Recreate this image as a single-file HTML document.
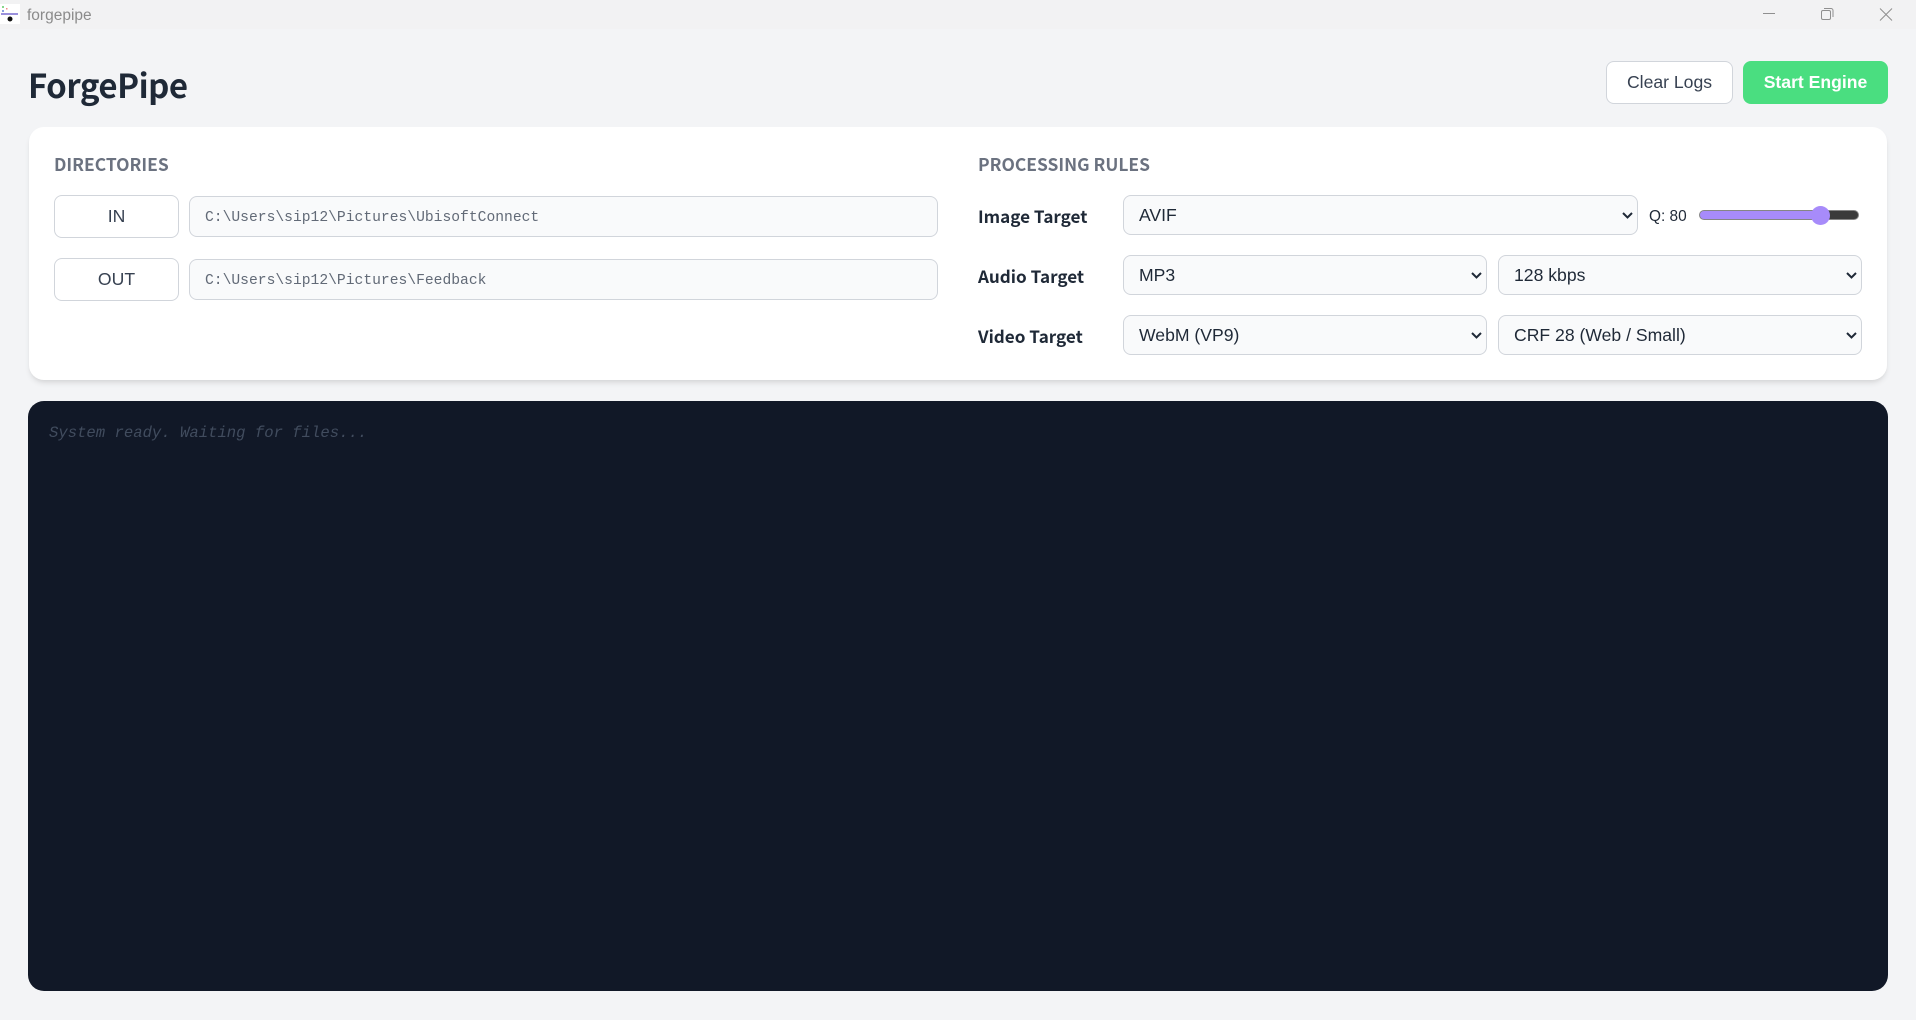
<!DOCTYPE html>
<html lang="en">
<head>
<meta charset="utf-8">
<title>forgepipe</title>
<style>
*{box-sizing:border-box}
html,body{margin:0;padding:0;width:1916px;height:1020px;overflow:hidden;background:#f3f4f6}
body{position:relative;font-family:"Liberation Sans",Arial,sans-serif;color:#1f2937}
.abs{position:absolute}
#bar{left:0;top:0;width:1916px;height:29px;background:#f2f2f3}
#bar .t{position:absolute;left:27px;top:5.5px;font-size:15.5px;line-height:20px;color:#8b8b8b}
.seg{font-family:"Noto Sans CJK JP","Liberation Sans",sans-serif}
h1{position:absolute;left:28px;top:60px;margin:0;font-size:33px;letter-spacing:-.5px;line-height:48px;font-weight:700;color:#1f2937;white-space:nowrap}
button{position:absolute;font-family:"Liberation Sans",Arial,sans-serif;font-size:17.6px;border-radius:8px;border:1.2px solid #d1d5db;background:#fff;color:#374151;padding:0;height:43px;top:61px;cursor:pointer}
#start{left:1743px;width:145px;background:#4ade80;border:none;color:#fff;font-weight:700}
#clear{left:1606px;width:127px}
#card{left:29px;top:127px;width:1858px;height:253px;background:#fff;border-radius:15px;box-shadow:0 4px 6px -1px rgba(0,0,0,.1),0 2px 4px -2px rgba(0,0,0,.06)}
.h{position:absolute;top:153px;margin:0;font-size:17.4px;line-height:24px;font-weight:600;color:#6b7280;white-space:nowrap}
.dirbtn{height:43px;width:125px;left:54px}
.path{position:absolute;left:189px;width:749px;height:41px;padding:2px 15px 0;border:1.2px solid #d1d5db;border-radius:8px;background:#f9fafb;font-family:"Liberation Mono",monospace;font-size:14.67px;color:#626a77;outline:none}
.lab{position:absolute;left:978px;font-size:17.1px;line-height:24px;font-weight:700;color:#1f2937;white-space:nowrap}
.sel{position:absolute;height:40px}
.sel select{appearance:none;-webkit-appearance:none;width:100%;height:100%;border:1.2px solid #d1d5db;border-radius:8px;background:#f9fafb;color:#1f2937;font-family:"Liberation Sans",Arial,sans-serif;font-size:17.6px;padding:0 0 1px 15px;outline:none}
.sel svg{position:absolute;right:4px;top:14px;pointer-events:none}
#q{left:1649px;top:206.5px;font-size:15.4px;line-height:20px;color:#1f2937}
input[type=range]{position:absolute;left:1699px;top:205px;width:160px;height:20px;margin:0;padding:0;appearance:none;-webkit-appearance:none;background:transparent;outline:none}
input[type=range]::-webkit-slider-runnable-track{height:10px;border-radius:5px;border:1px solid #858585;background:linear-gradient(90deg,#a78bfa 0,#a78bfa 122px,#3b3b3b 122px,#3b3b3b 100%)}
input[type=range]::-webkit-slider-thumb{-webkit-appearance:none;appearance:none;width:19px;height:19px;border-radius:50%;background:#a78bfa;border:none;margin-top:-5.5px}
#log{left:28px;top:401px;width:1860px;height:590px;background:#111827;border-radius:16px;padding:22px 21px;font-family:"Liberation Mono",monospace;font-size:15.6px;line-height:20px;font-style:italic;color:#414c5e}
</style>
</head>
<body>
<div id="bar" class="abs">
<svg class="abs" style="left:0;top:4px" width="20" height="20" viewBox="0 0 20 20">
<rect width="20" height="20" fill="#fff"/>
<rect x="2" y="2" width="2" height="2" fill="#86d68a"/>
<rect x="6" y="4" width="1.5" height="1.5" fill="#f08a8a"/>
<rect x="2" y="6" width="2" height="2" fill="#8a9fe0"/>
<rect x="1" y="9" width="17" height="2" fill="#9a90dc"/>
<circle cx="10" cy="15" r="2.5" fill="#111"/>
</svg>
<div class="t">forgepipe</div>
<svg class="abs" style="left:1760px;top:5px" width="140" height="18" viewBox="0 0 140 18" fill="none" stroke="#8f8f8f" stroke-width="1">
<path d="M3 8.5H15"/>
<rect x="61.5" y="5.5" width="9" height="9" rx="1.5"/>
<path d="M64 3.5H71a2 2 0 0 1 2 2V12"/>
<path d="M120 3.5L132 15.5M132 3.5L120 15.5"/>
</svg>
</div>

<h1 class="seg">ForgePipe</h1>
<button id="clear">Clear Logs</button>
<button id="start">Start Engine</button>

<div id="card" class="abs"></div>

<h2 class="h seg" style="left:54px">DIRECTORIES</h2>
<button class="dirbtn" style="top:195px">IN</button>
<input class="path" style="top:196px" type="text" readonly value="C:\Users\sip12\Pictures\UbisoftConnect">
<button class="dirbtn" style="top:258px">OUT</button>
<input class="path" style="top:259px" type="text" readonly value="C:\Users\sip12\Pictures\Feedback">

<h2 class="h seg" style="left:978px">PROCESSING RULES</h2>

<label class="lab seg" style="top:204px">Image Target</label>
<div class="sel" style="left:1123px;top:195px;width:515px"><select><option>AVIF</option></select>
<svg width="13" height="13" viewBox="0 0 13 13" fill="none" stroke="#1f2937" stroke-width="2"><path d="M2 4l4.5 4.5L11 4"/></svg></div>
<div id="q" class="abs">Q: 80</div>
<input type="range" min="0" max="100" value="80">

<label class="lab seg" style="top:264px">Audio Target</label>
<div class="sel" style="left:1123px;top:255px;width:364px"><select><option>MP3</option></select>
<svg width="13" height="13" viewBox="0 0 13 13" fill="none" stroke="#1f2937" stroke-width="2"><path d="M2 4l4.5 4.5L11 4"/></svg></div>
<div class="sel" style="left:1498px;top:255px;width:364px"><select><option>128 kbps</option></select>
<svg width="13" height="13" viewBox="0 0 13 13" fill="none" stroke="#1f2937" stroke-width="2"><path d="M2 4l4.5 4.5L11 4"/></svg></div>

<label class="lab seg" style="top:324px">Video Target</label>
<div class="sel" style="left:1123px;top:315px;width:364px"><select><option>WebM (VP9)</option></select>
<svg width="13" height="13" viewBox="0 0 13 13" fill="none" stroke="#1f2937" stroke-width="2"><path d="M2 4l4.5 4.5L11 4"/></svg></div>
<div class="sel" style="left:1498px;top:315px;width:364px"><select><option>CRF 28 (Web / Small)</option></select>
<svg width="13" height="13" viewBox="0 0 13 13" fill="none" stroke="#1f2937" stroke-width="2"><path d="M2 4l4.5 4.5L11 4"/></svg></div>

<div id="log" class="abs">System ready. Waiting for files...</div>
</body>
</html>
